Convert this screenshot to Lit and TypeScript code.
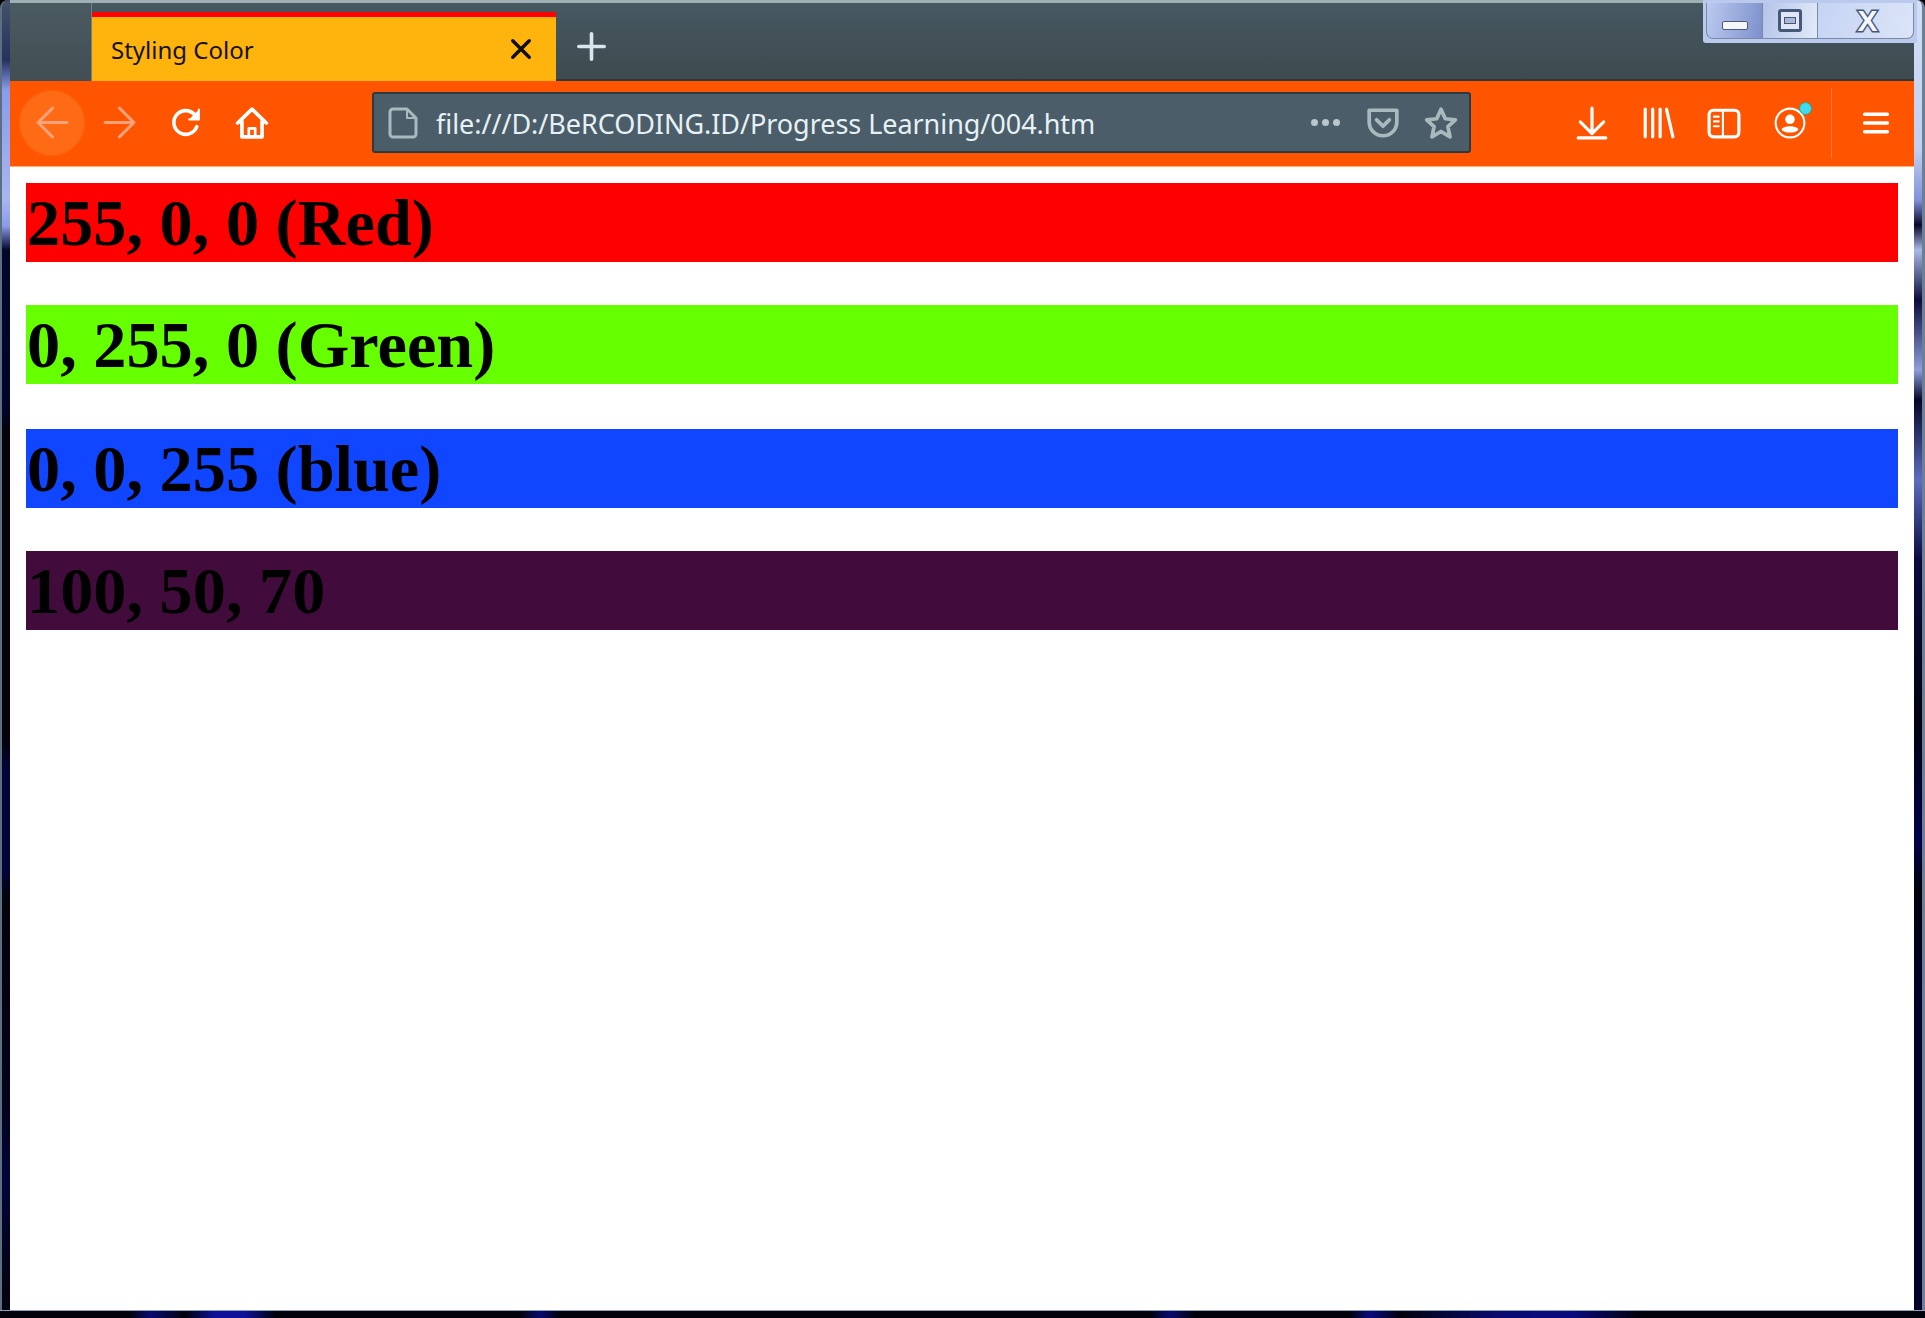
import { LitElement, css, html, svg } from "lit";
import { customElement } from "lit/decorators.js";

const bars = [
  { text: "255, 0, 0 (Red)", color: "#ff0000" },
  { text: "0, 255, 0 (Green)", color: "#66ff00" },
  { text: "0, 0, 255 (blue)", color: "#1046ff" },
  { text: "100, 50, 70", color: "#410c3c" },
];

const icon = (size: number, body: unknown) => html`<svg
  width=${size}
  height=${size}
  viewBox="0 0 32 32"
  fill="none"
  stroke="currentColor"
  stroke-width="3"
  stroke-linecap="round"
  stroke-linejoin="round"
>
  ${body}
</svg>`;

const icons = {
  back: svg`<path d="M30 16H3M16 2 2 16l14 14" />`,
  forward: svg`<path d="M2 16h27M16 2l14 14-14 14" />`,
  reload: svg`<path d="M26 20a11.500 11.500 0 1 1-2-11.500L27 12" stroke-width="3.500" /><path d="M28 3.500v9.500h-9.500" fill="currentColor" stroke-width="2" />`,
  home: svg`<path d="M2.500 16 16 3l13.500 13M6.500 14v15h19V14" stroke-width="3.500" /><path d="M13 29v-8h6v8" stroke-width="2.500" />`,
  file: svg`<path d="M6 2h14l9 9v16a3 3 0 0 1-3 3H6a3 3 0 0 1-3-3V5a3 3 0 0 1 3-3Z" /><path d="M20 2v9h9" stroke-width="2" />`,
  pocket: svg`<path d="M3 4h26v11a13 13 0 0 1-26 0Z" stroke-width="3.500" /><path d="m10 13 6 6 6-6" stroke-width="3.500" />`,
  star: svg`<path d="m16 3 4 9 9.500 1-7 6.500 2 9.500-8.500-5-8.500 5 2-9.500-7-6.500 9.500-1Z" stroke-width="3.500" />`,
  download: svg`<path d="M16 2v23M5 15l11 11 11-11M3 30h26" />`,
  library: svg`<path d="M4 3v26M11 3v26M18 3v26M24 3l6 26" />`,
  sidebar: svg`<rect x="2" y="4" width="28" height="25" rx="4" /><path d="M15 4v25M6.500 10H11M6.500 14.500H11M6.500 19H11" stroke-width="2" />`,
  profile: svg`<circle cx="16" cy="16" r="13.500" stroke-width="2" /><circle cx="16" cy="12.500" r="4.500" fill="currentColor" stroke="none" /><path d="M8 22c2-4 14-4 16 0-3 4-13 4-16 0Z" fill="currentColor" stroke="none" />`,
  menu: svg`<path d="M3 6h26M3 16h26M3 26h26" stroke-width="4" />`,
};

@customElement("app-root")
export class AppRoot extends LitElement {
  static styles = css`
    :host {
      display: block;
      height: 100vh;
    }

    .frame {
      display: grid;
      grid-template-columns: 10px 1fr 11px;
      grid-template-rows: 1fr 8px;
      height: 100%;
      background: #000;
    }

    .edge-left {
      background: linear-gradient(
        180deg,
        #46536a 0,
        #26305e 60px,
        #8a9cec 90px,
        #a8b6f0 200px,
        #8a9be8 226px,
        #05052a 250px,
        #03032a 410px,
        #020208 430px,
        #020208 740px,
        #03033a 770px,
        #03033a 870px,
        #020208 900px,
        #02021a 1100px,
        #03033a 1180px,
        #020210 1290px
      );
      border-left: 2px solid #5c6f80;
      border-top-left-radius: 8px;
    }

    .edge-right {
      background: linear-gradient(
        180deg,
        #d4def6 0,
        #c2cff0 150px,
        #7f92dc 200px,
        #08082a 225px,
        #aab8e8 250px,
        #0c0c3c 300px,
        #8e9ddc 370px,
        #060628 400px,
        #5c6cc0 480px,
        #0a0a40 560px,
        #020210 720px,
        #02024a 840px,
        #01010c 890px,
        #02022c 1000px,
        #02022c 1318px
      );
      border-right: 3px solid #6d7f92;
      border-top-right-radius: 8px;
    }

    .edge-bottom {
      grid-column: 1 / -1;
      border-top: 1px solid #8da2b5;
      background: linear-gradient(
        90deg,
        #02020c 0,
        #02020c 130px,
        #0a0a70 150px,
        #02020c 185px,
        #10109a 215px,
        #10109a 245px,
        #02020c 275px,
        #02020c 520px,
        #0a0a70 540px,
        #02020c 560px,
        #02020c 1150px,
        #0a0a70 1170px,
        #02020c 1195px,
        #02020c 1350px,
        #0a0a80 1370px,
        #02020c 1400px,
        #0a0a70 1500px,
        #0a0a80 1570px,
        #02020c 1640px,
        #02020c 1925px
      );
    }

    .window {
      display: flex;
      flex-direction: column;
      position: relative;
      min-width: 0;
      background: #fff;
    }

    .tabstrip {
      display: flex;
      flex: none;
      height: 78px;
      border-top: 3px solid #9fb0b5;
      background: linear-gradient(180deg, #475860, #3d4a50);
      box-shadow: inset 0 -2px 0 #2f393c;
    }

    .tab-spacer {
      width: 81px;
      border-right: 1px solid #6f8088;
      background: linear-gradient(180deg, #4b5b62, #414e53);
    }

    .tab {
      display: flex;
      align-items: center;
      justify-content: space-between;
      box-sizing: border-box;
      width: 464px;
      margin-top: 9px;
      padding: 0 24px 0 19px;
      border-top: 5px solid #ff0000;
      background: #ffb30d;
      color: #14120a;
      font: 24px "Noto Sans", sans-serif;
    }

    .tab svg {
      display: block;
      color: #0e0e0a;
    }

    .newtab {
      display: flex;
      align-items: center;
      justify-content: center;
      width: 70px;
      height: 66px;
      margin-top: 10px;
      color: #d8e6ee;
    }

    .controls {
      position: absolute;
      top: 0;
      right: -3px;
      display: grid;
      grid-template-columns: 57px 55px 96px;
      box-sizing: border-box;
      width: 214px;
      height: 43px;
      padding: 3px 3px 4px 3px;
      background: #bcc9ef;
      border-bottom-left-radius: 3px;
    }

    .ctl {
      display: flex;
      align-items: center;
      justify-content: center;
      border-bottom: 1px solid #7a8aa5;
      border-right: 1px solid #7a8aa5;
    }

    .ctl.min {
      padding-top: 10px;
      border-left: 1px solid #7a8aa5;
      border-bottom-left-radius: 7px;
      background: linear-gradient(100deg, #bccaf0, #7d90cb);
    }

    .ctl.max {
      background: linear-gradient(100deg, #b4c4ea, #e2eaf8);
    }

    .ctl.close {
      padding-left: 4px;
      border-bottom-right-radius: 7px;
      background: linear-gradient(100deg, #c6d4f4, #dbe4f7);
    }

    .min-glyph {
      width: 24px;
      height: 7px;
      border: 1.5px solid #4a5a78;
      border-radius: 2px;
      background: #f4f6fa;
    }

    .max-glyph {
      display: flex;
      align-items: center;
      justify-content: center;
      width: 18px;
      height: 17px;
      border: 3px solid #46587a;
      border-radius: 3px;
      background: #dfe7f6;
    }

    .max-glyph span {
      width: 10px;
      height: 5px;
      border: 1px solid #46587a;
      background: #a9b8d8;
    }

    .close-glyph {
      color: #f4f7fc;
      font: bold 30px/1 "Liberation Sans", sans-serif;
      -webkit-text-stroke: 3px #46587a;
      paint-order: stroke fill;
    }

    .toolbar {
      display: flex;
      align-items: center;
      flex: none;
      box-sizing: border-box;
      height: 85px;
      padding: 0 0 2px 9px;
      background: #ff5500;
      color: #fff;
    }

    .btn {
      display: flex;
      align-items: center;
      justify-content: center;
      flex: none;
      width: 67px;
      height: 66px;
    }

    .btn.hover {
      width: 66px;
      margin-right: 1px;
      border-radius: 50%;
      background: #ff6a14;
      box-shadow: inset 0 0 0 1px #fb600c;
    }

    .btn.dim {
      color: #ffa27a;
    }

    .btn.home {
      width: 64px;
    }

    .urlbar {
      display: flex;
      align-items: center;
      flex: none;
      box-sizing: border-box;
      width: 1099px;
      height: 61px;
      margin-left: 88px;
      padding: 0 11px 0 13px;
      border: 2px solid #2d3a3f;
      border-radius: 3px;
      background: #4b5d69;
      color: #a9b9bd;
    }

    .url {
      flex: 1;
      margin-left: 17px;
      padding-top: 2px;
      color: #e6f1f5;
      font: 27px "Noto Sans", sans-serif;
      letter-spacing: -0.05px;
      white-space: nowrap;
    }

    .url-actions {
      display: flex;
      align-items: center;
      gap: 24px;
    }

    .dots {
      display: flex;
      justify-content: center;
      gap: 4px;
      width: 33px;
    }

    .dots i {
      width: 7px;
      height: 7px;
      border-radius: 50%;
      background: #b9c6ca;
    }

    .tools {
      display: flex;
      margin-left: 88px;
    }

    .tools .btn {
      width: 66px;
      position: relative;
    }

    .badge {
      position: absolute;
      top: 12px;
      right: 11px;
      width: 11px;
      height: 11px;
      border: 1px solid #2fa47a;
      border-radius: 50%;
      background: #3fdcf0;
    }

    .sep {
      flex: none;
      width: 1px;
      height: 70px;
      margin-left: 8px;
      background: #ff7a3c;
    }

    .menu {
      margin-left: 10px;
    }

    .page {
      display: flex;
      flex-direction: column;
      gap: 43px;
      padding: 16px;
      border-top: 1px solid #ffb070;
    }

    h1 {
      margin: 0;
      padding-left: 1px;
      height: 79px;
      color: #000;
      font: bold 66.300px/79px "Liberation Serif", serif;
    }

    h1:nth-child(3) {
      margin-top: 2px;
    }
  `;

  render() {
    return html`<div class="frame">
      <div class="edge-left"></div>
      <div class="window">
        <div class="tabstrip">
          <div class="tab-spacer"></div>
          <div class="tab">
            <span>Styling Color</span>
            ${icon(22, svg`<path d="M4 4l24 24M28 4 4 28" stroke-width="5" />`)}
          </div>
          <div class="newtab">${icon(29, svg`<path d="M16 2v28M2 16h28" stroke-width="4" />`)}</div>
        </div>
        <div class="controls">
          <div class="ctl min"><div class="min-glyph"></div></div>
          <div class="ctl max"><div class="max-glyph"><span></span></div></div>
          <div class="ctl close"><span class="close-glyph">X</span></div>
        </div>
        <div class="toolbar">
          <div class="btn hover dim">${icon(33, icons.back)}</div>
          <div class="btn dim">${icon(33, icons.forward)}</div>
          <div class="btn">${icon(33, icons.reload)}</div>
          <div class="btn home">${icon(34, icons.home)}</div>
          <div class="urlbar">
            ${icon(32, icons.file)}
            <span class="url">file:///D:/BeRCODING.ID/Progress Learning/004.htm</span>
            <div class="url-actions">
              <div class="dots"><i></i><i></i><i></i></div>
              ${icon(34, icons.pocket)} ${icon(34, icons.star)}
            </div>
          </div>
          <div class="tools">
            <div class="btn">${icon(34, icons.download)}</div>
            <div class="btn">${icon(34, icons.library)}</div>
            <div class="btn">${icon(34, icons.sidebar)}</div>
            <div class="btn">${icon(34, icons.profile)}<span class="badge"></span></div>
          </div>
          <div class="sep"></div>
          <div class="btn menu">${icon(28, icons.menu)}</div>
        </div>
        <div class="page">
          ${bars.map((b) => html`<h1 style="background:${b.color}">${b.text}</h1>`)}
        </div>
      </div>
      <div class="edge-right"></div>
      <div class="edge-bottom"></div>
    </div>`;
  }
}
